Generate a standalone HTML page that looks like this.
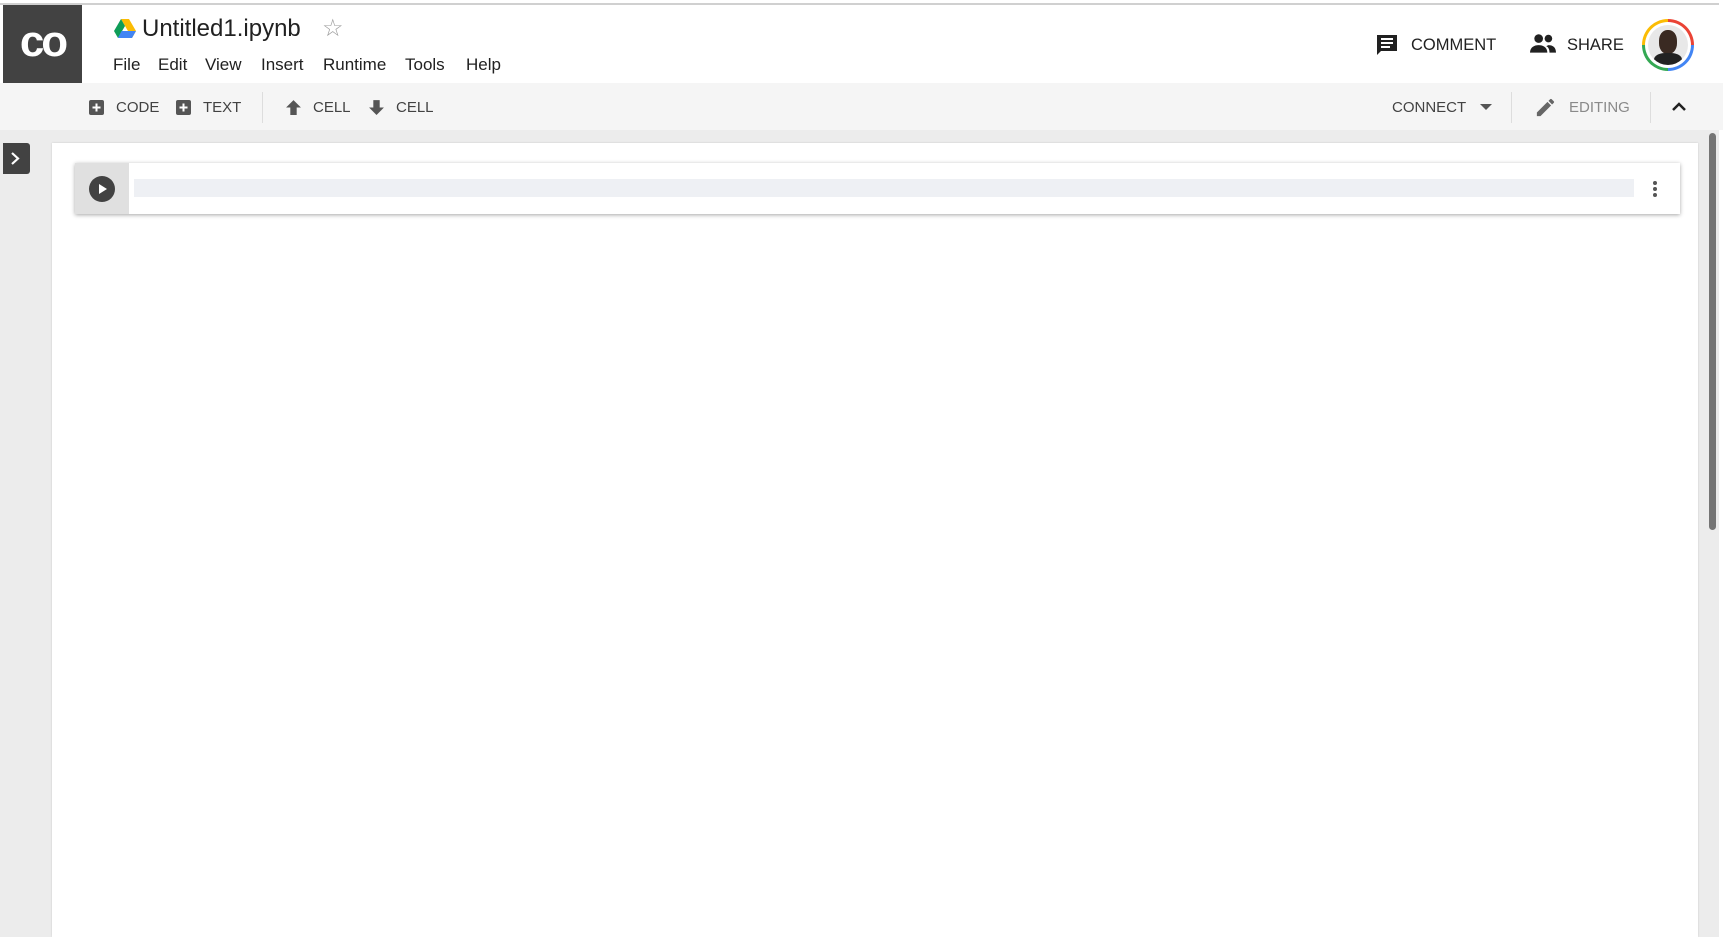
<!DOCTYPE html>
<html><head><meta charset="utf-8"><style>
*{margin:0;padding:0;box-sizing:border-box}
body{width:1723px;height:937px;overflow:hidden;background:#fff;font-family:"Liberation Sans",Arial,sans-serif;position:relative;color:#212121}
.a{position:absolute}
.t{position:absolute;font-size:15px;color:#424242;line-height:1}
.m{position:absolute;font-size:17px;color:#212121;top:55px}
</style></head><body>
<div class="a" style="left:0;top:3px;width:1719px;height:2px;background:#d0d0d0"></div>
<div class="a" style="left:3px;top:5px;width:79px;height:78px;background:#424242;color:#fff;font-weight:bold;font-size:44px;line-height:74px;text-align:center;letter-spacing:-3px">co</div>
<svg class="a" style="left:114px;top:19px" width="22" height="19" viewBox="0 0 22 19"><polygon points="7,0 15,0 22,12 18,19" fill="#fbbc04"/><polygon points="7,0 11,7 4,19 0,12" fill="#0f9d58"/><polygon points="4,19 7.5,12 22,12 18,19" fill="#4285f4"/></svg>
<div class="a" style="left:142px;top:15px;font-size:24px;color:#212121">Untitled1.ipynb</div>
<div class="a" style="left:322px;top:14px;font-size:24px;color:#9e9e9e">☆</div>
<div class="m" style="left:113px">File</div><div class="m" style="left:158px">Edit</div><div class="m" style="left:205px">View</div><div class="m" style="left:261px">Insert</div><div class="m" style="left:323px">Runtime</div><div class="m" style="left:405px">Tools</div><div class="m" style="left:466px">Help</div>
<svg class="a" style="left:1375px;top:33px" width="24" height="24" viewBox="0 0 24 24"><path d="M2 2h20v16H6l-4 4z" fill="#212121"/><path d="M6 6h12M6 10h12M6 14h9" stroke="#fff" stroke-width="2"/></svg>
<div class="a" style="left:1411px;top:36px;font-size:16.5px">COMMENT</div>
<svg class="a" style="left:1530px;top:33px" width="26" height="22" viewBox="0 0 24 20"><circle cx="8" cy="5" r="4" fill="#212121"/><circle cx="17" cy="5" r="3.5" fill="#212121"/><path d="M0 18c0-5 4-7 8-7s8 2 8 7z" fill="#212121"/><path d="M17 11c4 0 7 2 7 7h-6c0-3-1-5-3-6z" fill="#212121"/></svg>
<div class="a" style="left:1567px;top:36px;font-size:16.5px">SHARE</div>
<div class="a" style="left:1642px;top:19px;width:52px;height:52px;border-radius:50%;background:conic-gradient(#ea4335 0 25%,#4285f4 25% 50%,#34a853 50% 75%,#fbbc04 75%)"></div>
<div class="a" style="left:1645px;top:22px;width:46px;height:46px;border-radius:50%;background:#fff"></div>
<div class="a" style="left:1648px;top:25px;width:40px;height:40px;border-radius:50%;background:#e8e8e8;overflow:hidden"><div class="a" style="left:11px;top:5px;width:18px;height:24px;border-radius:45%;background:#3a2a22"></div><div class="a" style="left:6px;top:28px;width:28px;height:16px;border-radius:40% 40% 0 0;background:#222"></div></div>
<div class="a" style="left:0;top:83px;width:1723px;height:47px;background:#f5f5f5"></div>
<svg class="a" style="left:89px;top:100px" width="15" height="15"><rect width="15" height="15" rx="2" fill="#555"/><path d="M7.5 3.5v8M3.5 7.5h8" stroke="#fff" stroke-width="2"/></svg>
<div class="t" style="left:116px;top:100px">CODE</div>
<svg class="a" style="left:176px;top:100px" width="15" height="15"><rect width="15" height="15" rx="2" fill="#555"/><path d="M7.5 3.5v8M3.5 7.5h8" stroke="#fff" stroke-width="2"/></svg>
<div class="t" style="left:203px;top:100px">TEXT</div>
<div class="a" style="left:262px;top:92px;width:1px;height:31px;background:#ddd"></div>
<svg class="a" style="left:285px;top:99px" width="17" height="17" viewBox="0 0 16 16"><path d="M8 1l7 7h-4v7H5V8H1z" fill="#555"/></svg>
<div class="t" style="left:313px;top:100px">CELL</div>
<svg class="a" style="left:368px;top:99px" width="17" height="17" viewBox="0 0 16 16"><path d="M8 15l7-7h-4V1H5v7H1z" fill="#555"/></svg>
<div class="t" style="left:396px;top:100px">CELL</div>
<div class="t" style="left:1392px;top:100px">CONNECT</div>
<svg class="a" style="left:1480px;top:104px" width="12" height="7"><path d="M0 0h12L6 6z" fill="#555"/></svg>
<div class="a" style="left:1511px;top:92px;width:1px;height:31px;background:#ddd"></div>
<svg class="a" style="left:1534px;top:96px" width="23" height="23" viewBox="0 0 24 24"><path d="M3 17.25V21h3.75L17.8 9.940l-3.75-3.75zM20.7 7.04a1 1 0 000-1.41l-2.34-2.34a1 1 0 00-1.41 0l-1.83 1.83 3.75 3.75z" fill="#666"/></svg>
<div class="t" style="left:1569px;top:100px;color:#8a8a8a">EDITING</div>
<div class="a" style="left:1650px;top:92px;width:1px;height:31px;background:#ddd"></div>
<svg class="a" style="left:1671px;top:101px" width="16" height="11"><path d="M2 9l6-6 6 6" stroke="#212121" stroke-width="2.5" fill="none"/></svg>
<div class="a" style="left:0;top:130px;width:1719px;height:807px;background:#ececec"></div>
<div class="a" style="left:3px;top:143px;width:27px;height:31px;background:#424242;border-radius:0 3px 3px 0"></div>
<svg class="a" style="left:9px;top:151px" width="12" height="15"><path d="M3 2l6 5.5L3 13" stroke="#fff" stroke-width="2.2" fill="none"/></svg>
<div class="a" style="left:52px;top:143px;width:1646px;height:794px;background:#fff;box-shadow:0 0 2px rgba(0,0,0,.15)"></div>
<div class="a" style="left:75px;top:163px;width:1605px;height:51px;background:#fff;box-shadow:0 1px 4px rgba(0,0,0,.35)"></div>
<div class="a" style="left:75px;top:163px;width:54px;height:51px;background:#e0e0e0"></div>
<div class="a" style="left:89px;top:176px;width:26px;height:26px;border-radius:50%;background:#424242"></div>
<svg class="a" style="left:98px;top:183px" width="10" height="12"><path d="M1 1l8 5-8 5z" fill="#fff"/></svg>
<div class="a" style="left:134px;top:179px;width:1500px;height:18px;background:#eef0f4"></div>
<div class="a" style="left:1653px;top:181px;width:4px;height:4px;border-radius:50%;background:#555;box-shadow:0 6px 0 #555,0 12px 0 #555"></div>
<div class="a" style="left:1709px;top:133px;width:7px;height:397px;border-radius:4px;background:#757575"></div>
</body></html>
